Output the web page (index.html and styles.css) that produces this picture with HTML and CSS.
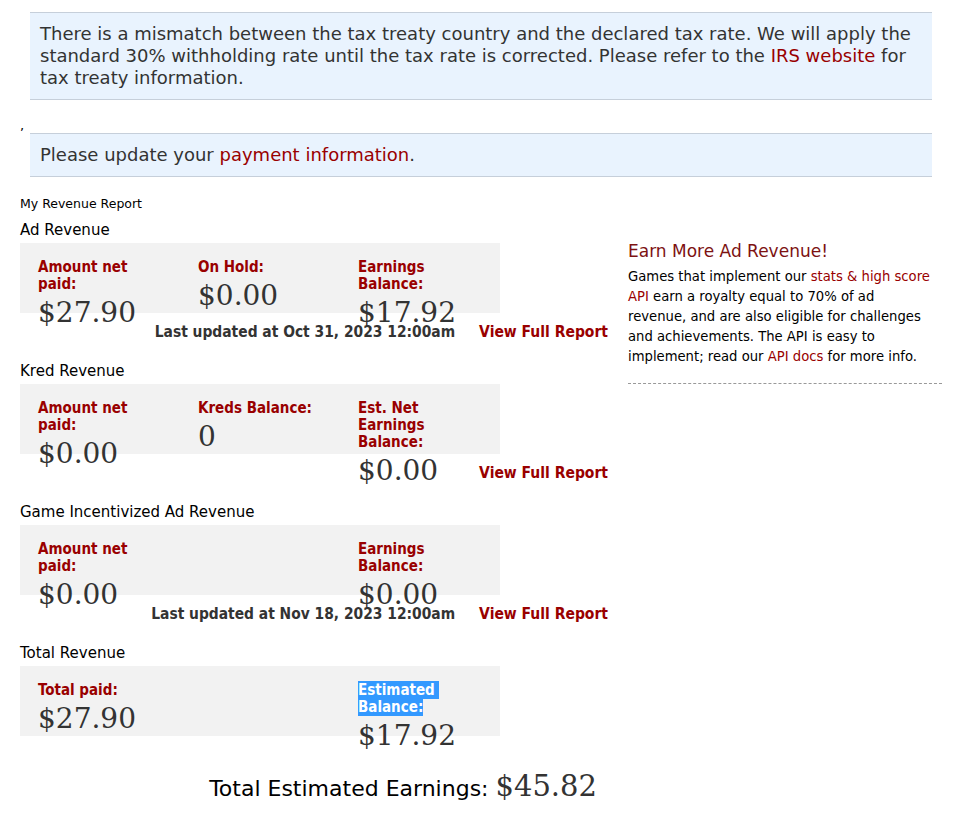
FILE: index.html
```html
<!DOCTYPE html>
<html>
<head>
<meta charset="utf-8">
<link rel="stylesheet" href="styles.css">
</head>
<body>
<div class="page">
  <div class="notice notice-wide">There is a mismatch between the tax treaty country and the declared tax rate. We will apply the standard 30% withholding rate until the tax rate is corrected. Please refer to the <a href="#">IRS website</a> for tax treaty information.</div>
  <div class="comma">,</div>
  <div class="notice">Please update your <a href="#">payment information</a>.</div>

  <div class="layout">
    <div class="main">
      <div class="report-title">My Revenue Report</div>

      <section class="rev">
        <h3 class="rev-title">Ad Revenue</h3>
        <div class="box">
          <div class="col"><div class="label">Amount net paid:</div><div class="value">$27.90</div></div>
          <div class="col"><div class="label">On Hold:</div><div class="value">$0.00</div></div>
          <div class="col"><div class="label">Earnings Balance:</div><div class="value">$17.92</div></div>
        </div>
        <div class="foot"><span class="updated">Last updated at Oct 31, 2023 12:00am</span><a class="full" href="#">View Full Report</a></div>
      </section>

      <section class="rev">
        <h3 class="rev-title">Kred Revenue</h3>
        <div class="box">
          <div class="col"><div class="label">Amount net paid:</div><div class="value">$0.00</div></div>
          <div class="col"><div class="label">Kreds Balance:</div><div class="value">0</div></div>
          <div class="col"><div class="label">Est. Net Earnings Balance:</div><div class="value">$0.00</div></div>
        </div>
        <div class="foot"><a class="full" href="#">View Full Report</a></div>
      </section>

      <section class="rev">
        <h3 class="rev-title">Game Incentivized Ad Revenue</h3>
        <div class="box">
          <div class="col"><div class="label">Amount net paid:</div><div class="value">$0.00</div></div>
          <div class="col"></div>
          <div class="col"><div class="label">Earnings Balance:</div><div class="value">$0.00</div></div>
        </div>
        <div class="foot"><span class="updated">Last updated at Nov 18, 2023 12:00am</span><a class="full" href="#">View Full Report</a></div>
      </section>

      <section class="rev">
        <h3 class="rev-title">Total Revenue</h3>
        <div class="box">
          <div class="col"><div class="label">Total paid:</div><div class="value">$27.90</div></div>
          <div class="col"></div>
          <div class="col"><div class="label"><span class="sel">Estimated&nbsp;<br>Balance:</span></div><div class="value">$17.92</div></div>
        </div>
      </section>

      <div class="grand">Total Estimated Earnings: <span class="grand-amt">$45.82</span></div>
    </div>

    <aside class="side">
      <h2 class="side-title">Earn More Ad Revenue!</h2>
      <p class="side-text">Games that implement our <a href="#">stats &amp; high score API</a> earn a royalty equal to 70% of ad revenue, and are also eligible for challenges and achievements. The API is easy to implement; read our <a href="#">API docs</a> for more info.</p>
    </aside>
  </div>
</div>
</body>
</html>
```

FILE: styles.css
```css
html, body {
  margin: 0;
  padding: 0;
  background: #fff;
}

body {
  font-family: "DejaVu Sans", Verdana, sans-serif;
  color: #333;
}

a {
  color: #990000;
  text-decoration: none;
}

.page {
  width: 922px;
  padding: 12px 0 0 20px;
}

.notice {
  margin: 0 10px;
  padding: 10px 10px;
  background: #e9f3fe;
  border-top: 1px solid #c6cfda;
  border-bottom: 1px solid #c6cfda;
  font-size: 18px;
  line-height: 22px;
  color: #333;
}

.comma {
  font-size: 13px;
  line-height: 14px;
  height: 14px;
  margin-top: 19px;
  color: #000;
}

.layout {
  display: flex;
  gap: 20px;
  margin-top: 18px;
}

.main {
  width: 588px;
}

.report-title {
  font-size: 12.5px;
  line-height: 18px;
  color: #000;
}

.rev-title {
  margin: 8px 0 4px;
  font-size: 15px;
  font-weight: normal;
  line-height: 18px;
  color: #000;
}

.rev + .rev .rev-title {
  margin-top: 21px;
}

.box {
  display: grid;
  grid-template-columns: 160px 160px 160px;
  width: 480px;
  height: 70px;
  box-sizing: border-box;
  padding-top: 16px;
  background: #f2f2f2;
}

.col {
  padding: 0 18px;
}

.label {
  font-family: "DejaVu Sans Condensed", Tahoma, sans-serif;
  font-weight: bold;
  font-size: 15px;
  line-height: 17px;
  color: #990000;
}

.sel {
  background: #3399ff;
  color: #fff;
}

.value {
  font-family: "DejaVu Serif", Georgia, serif;
  font-size: 28px;
  line-height: 40px;
  color: #333;
}

.foot {
  display: flex;
  justify-content: flex-end;
  align-items: baseline;
  gap: 24px;
  margin-top: 10px;
  height: 18px;
  line-height: 18px;
  font-family: "DejaVu Sans Condensed", Tahoma, sans-serif;
  font-weight: bold;
}

.updated {
  font-size: 15.4px;
  color: #333;
}

.full {
  font-size: 15.5px;
  color: #990000;
}

.grand {
  margin-top: 32px;
  padding-right: 11px;
  text-align: right;
  font-size: 22px;
  line-height: 36px;
  color: #000;
}

.grand-amt {
  font-family: "DejaVu Serif", Georgia, serif;
  font-size: 29px;
  color: #333;
}

.side {
  width: 314px;
  padding-top: 45px;
}

.side-title {
  margin: 0;
  font-size: 17px;
  font-weight: normal;
  line-height: 22px;
  color: #7d1212;
}

.side-text {
  margin: 5px 0 0;
  padding: 0 12px 16px 0;
  border-bottom: 1px dashed #999;
  font-size: 13.2px;
  line-height: 20px;
  color: #000;
}
```
